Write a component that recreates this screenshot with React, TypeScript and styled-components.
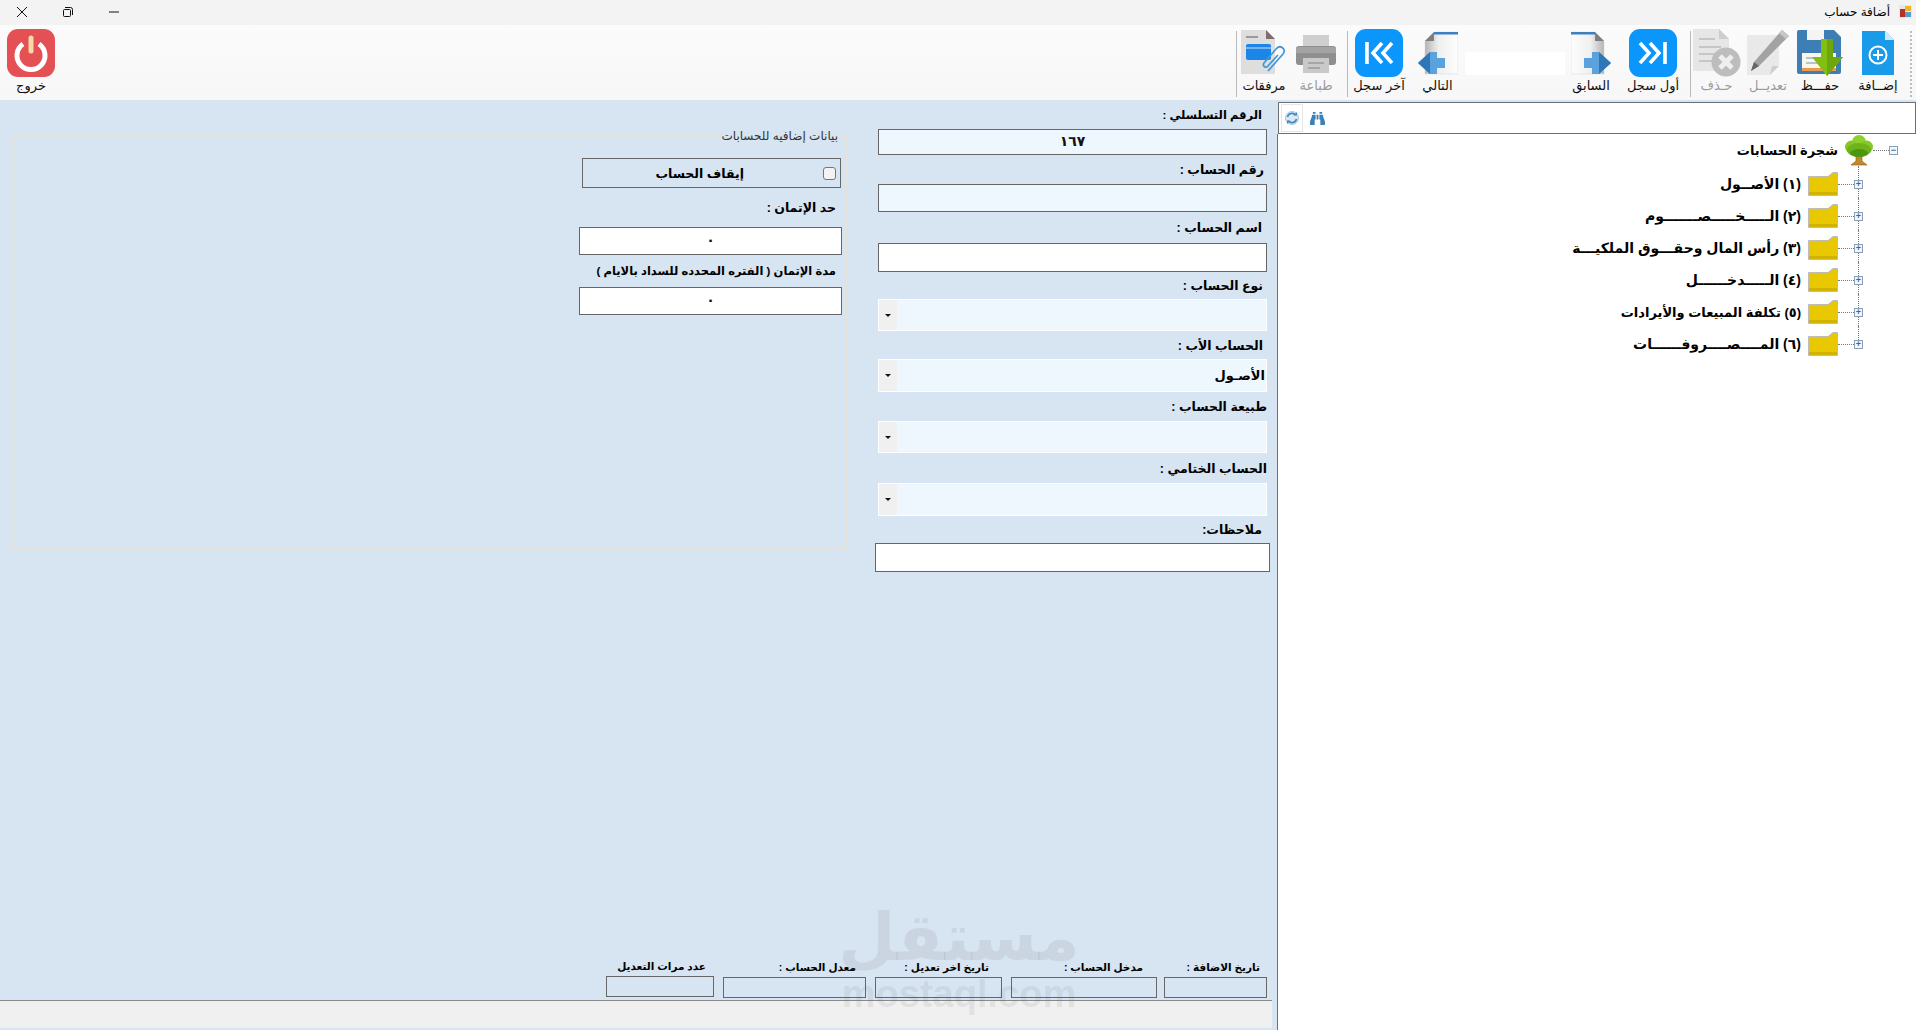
import React from 'react'
import styled, { createGlobalStyle } from 'styled-components'
import { FaBinoculars } from 'react-icons/fa'

const GlobalStyle = createGlobalStyle`
    html, body, #root {
        margin: 0;
        height: 100%;
    }
    body {
        overflow: hidden;
        font-family: "Liberation Sans", "DejaVu Sans", sans-serif;
        background-color: #d7e4f1;
        color: #000;
    }
`

const AddIcon = () => (
    <svg width="32" height="44" viewBox="0 0 32 44">
        <path d="M0 0H23L32 9V44H0Z" fill="#1a9bea" />
        <path d="M23 0L32 9H23Z" fill="#cfe9fa" />
        <circle cx="16" cy="24" r="8.5" fill="none" stroke="#fff" strokeWidth="2" />
        <path d="M16 19V29M11 24H21" stroke="#fff" strokeWidth="2" />
    </svg>
)

const SaveIcon = () => (
    <svg width="46" height="46" viewBox="0 0 46 46">
        <path d="M2 0H37L44 7V42Q44 44 42 44H2Q0 44 0 42V2Q0 0 2 0Z" fill="#3d7eb4" />
        <rect x="10" y="0" width="17" height="10" fill="#f4f4f4" />
        <rect x="5" y="23" width="34" height="18" fill="#fbf6ec" />
        <rect x="5" y="38" width="34" height="3" fill="#e59a55" />
        <path d="M9 28H24M9 33H24" stroke="#9db4c7" strokeWidth="1.5" />
        <path d="M24 9H36V27H46L30 46L15 27H24Z" fill="#83bf12" />
        <path d="M30 9H36V27H46L30 46Z" fill="#6ea70b" />
    </svg>
)

const EditIcon = () => (
    <svg width="44" height="46" viewBox="0 0 44 46">
        <path d="M1 5H33V35L24 45H1Z" fill="#e9e9e9" />
        <path d="M24 45L26 36H33Z" fill="#cfcfcf" />
        <path d="M36 0L43 6L13 36L5 41L8 32Z" fill="#a3a3a3" />
        <path d="M36 0L43 6L40 9L33 3Z" fill="#c7c7c7" />
        <path d="M8 32L13 36L5 41Z" fill="#666" />
    </svg>
)

const DeleteIcon = () => (
    <svg width="48" height="48" viewBox="0 0 48 48">
        <path d="M0 0H26L36 10V42H0Z" fill="#e6e6e6" />
        <path d="M26 0L36 10H26Z" fill="#cdcdcd" />
        <path d="M6 10H22M6 18H28M6 25H24M6 32H20" stroke="#c6c6c6" strokeWidth="2" />
        <circle cx="33" cy="33" r="14.5" fill="#bdbdbd" />
        <path d="M27 27L39 39M39 27L27 39" stroke="#efefef" strokeWidth="5" />
    </svg>
)

const NavIcon = ({ flip }: { flip?: boolean }) => (
    <svg width="48" height="48" viewBox="0 0 48 48">
        <rect width="48" height="48" rx="11" fill="#0a96fb" />
        <g transform={flip ? 'matrix(-1 0 0 1 48 0)' : undefined} fill="none" stroke="#fff" strokeWidth="3.6">
            <path d="M11 14L20 24L11 34M21 14L30 24L21 34" />
            <path d="M36 13V35" />
        </g>
    </svg>
)

const DocArrowIcon = ({ flip }: { flip?: boolean }) => {
    const id = flip ? 'docFadeL' : 'docFadeR'
    return (
        <svg width="40" height="46" viewBox="0 0 40 46">
            <defs>
                <linearGradient id={id} x1="0" x2="1" y1="0" y2="0">
                    <stop offset="0" stopColor="#fdfdfd" />
                    <stop offset="0.6" stopColor="#efefef" />
                    <stop offset="1" stopColor="#b4b4b4" />
                </linearGradient>
            </defs>
            <g transform={flip ? 'matrix(-1 0 0 1 40 0)' : undefined}>
                <path d="M0 2H24L33 11V44H0Z" fill={`url(#${id})`} stroke="#d4d4d4" strokeWidth="0.5" />
                <rect y="2" width="24" height="2.5" fill="#3f7fc0" />
                <path d="M24 2L33 11H24Z" fill="#7f7f7f" />
                <path d="M21 22H28L40 33L28 44H21V38H13V28H21Z" fill="#5aa2dd" />
                <path d="M28 22L40 33L28 44V33Z" fill="#2f76b6" />
            </g>
        </svg>
    )
}

const PrinterIcon = () => (
    <svg width="40" height="38" viewBox="0 0 40 38">
        <rect x="7" y="0" width="26" height="12" fill="#cfcfcf" />
        <path d="M3 11H37Q40 11 40 14V27Q40 30 37 30H3Q0 30 0 27V14Q0 11 3 11Z" fill="#8f8f8f" />
        <rect x="0" y="12" width="40" height="6" fill="#a3a3a3" />
        <rect x="7" y="23" width="26" height="15" fill="#c9c9c9" />
        <path d="M12 28H28M12 33H24" stroke="#9a9a9a" strokeWidth="1.5" />
    </svg>
)

const AttachIcon = () => (
    <svg width="46" height="46" viewBox="0 0 46 46">
        <path d="M0 0H25L34 9V44H0Z" fill="#dedede" />
        <path d="M25 0L34 9H25Z" fill="#7d6d6d" />
        <path d="M5 7H17" stroke="#999" strokeWidth="2" />
        <rect x="5" y="14" width="25" height="16" rx="2" fill="#1c86e8" />
        <path d="M5 18H30" stroke="#8fc5f5" strokeWidth="1.5" />
        <path d="M27 41L42 24C46 19 39 14 35 19L23 33C21 36 25 39 27 36L37 25" fill="none" stroke="#3f97d8" strokeWidth="1.7" />
    </svg>
)

const PowerIcon = () => (
    <svg width="48" height="48" viewBox="0 0 48 48">
        <rect width="48" height="48" rx="11" fill="#e55054" />
        <path d="M16 15A14 14 0 1 0 32 15" fill="none" stroke="#fff" strokeWidth="5" />
        <path d="M24 9V22" stroke="#f9d9a8" strokeWidth="5" strokeLinecap="round" />
    </svg>
)

const TreeIcon = () => (
    <svg width="28" height="31" viewBox="0 0 28 31">
        <path d="M11 20H17V26L22 30H6L11 26Z" fill="#c28a2c" stroke="#8a5a12" strokeWidth="0.6" />
        <circle cx="14" cy="7" r="7" fill="#8fd02e" />
        <circle cx="6.5" cy="12" r="6.5" fill="#86c826" />
        <circle cx="21.5" cy="12" r="6.5" fill="#86c826" />
        <ellipse cx="14" cy="15" rx="12" ry="7" fill="#6fb31c" />
        <ellipse cx="14" cy="18" rx="9" ry="4" fill="#4f9610" />
    </svg>
)

const FolderIcon = () => (
    <svg width="30" height="24" viewBox="0 0 30 24">
        <path d="M0.5 4.5H20L25 0.5H29.5V23.5H0.5Z" fill="#e8c800" stroke="#bdbdbd" />
        <rect x="1" y="20" width="28" height="3" fill="#d4b300" />
    </svg>
)

const RefreshIcon = () => (
    <svg width="16" height="16" viewBox="0 0 16 16">
        <circle cx="8" cy="8" r="6.5" fill="#dbe9f4" stroke="#a9c8e0" />
        <path d="M3.5 7A4.6 4.6 0 0 1 11.5 5M12.5 9A4.6 4.6 0 0 1 4.5 11" fill="none" stroke="#3f86bb" strokeWidth="1.6" />
        <path d="M9.5 5.5H13V2ZM6.5 10.5H3V14Z" fill="#3f86bb" />
    </svg>
)

const AppIcon = () => (
    <svg width="13" height="13" viewBox="0 0 13 13">
        <rect width="13" height="13" fill="#e8e8e8" />
        <rect x="6" y="1" width="6" height="5" fill="#f0b429" />
        <rect x="1" y="4" width="5" height="8" fill="#b5331f" />
        <rect x="6" y="7" width="6" height="5" fill="#5a9bd5" />
    </svg>
)

const CloseGlyph = () => (
    <svg width="10" height="10" viewBox="0 0 10 10">
        <path d="M0 0L10 10M10 0L0 10" stroke="#111" strokeWidth="1" />
    </svg>
)

const RestoreGlyph = () => (
    <svg width="10" height="10" viewBox="0 0 10 10">
        <path d="M2 0.5H7.5Q9.5 0.5 9.5 2.5V8" fill="none" stroke="#111" />
        <rect x="0.5" y="2.5" width="7" height="7" rx="1" fill="none" stroke="#111" />
    </svg>
)

const MinimizeGlyph = () => (
    <svg width="10" height="10" viewBox="0 0 10 10">
        <path d="M0 5H10" stroke="#111" />
    </svg>
)

const toolbarRight = [
    { kind: 'sep', ml: 0 },
    { label: 'مرفقات', w: 54, icon: <AttachIcon /> },
    { label: 'طباعة', w: 50, icon: <PrinterIcon />, off: true, gap: 2 },
    { kind: 'sep', ml: 6 },
    { label: 'آخر سجل', w: 62, icon: <NavIcon flip /> },
    { label: 'التالي', w: 55, icon: <DocArrowIcon flip /> },
    { kind: 'blank' },
    { label: 'السابق', w: 52, icon: <DocArrowIcon /> },
    { label: 'أول سجل', w: 72, icon: <NavIcon /> },
    { kind: 'sep', ml: 1 },
    { label: 'حـذف', w: 51, icon: <DeleteIcon />, off: true },
    { label: 'تعديــل', w: 52, icon: <EditIcon />, off: true },
    { label: 'حفـــظ', w: 52, icon: <SaveIcon /> },
    { label: 'إضــافة', w: 64, icon: <AddIcon /> },
]

const mainFields = [
    { label: 'الرقم التسلسلي :', gap: 29, inset: 5, size: 11.5, type: 'text', value: '١٦٧', tint: true, h: 26 },
    { label: 'رقم الحساب :', gap: 29, inset: 3, type: 'text', value: '', tint: true, h: 28 },
    { label: 'اسم الحساب :', gap: 31, inset: 5, type: 'text', value: '', h: 29 },
    { label: 'نوع الحساب :', gap: 27, inset: 4, type: 'combo', value: '', h: 32 },
    { label: 'الحساب الأب :', gap: 28, inset: 4, type: 'combo', value: 'الأصـول', h: 33 },
    { label: 'طبيعة الحساب :', gap: 29, inset: 0, type: 'combo', value: '', h: 32 },
    { label: 'الحساب الختامي :', gap: 30, inset: 0, type: 'combo', value: '', h: 33 },
]

const footerFields = [
    { label: 'عدد مرات التعديل', w: 108, inset: 8, ml: 0, lift: true },
    { label: 'معدل الحساب :', w: 143, inset: 10, ml: 9 },
    { label: 'تاريخ اخر تعديل :', w: 127, inset: 13, ml: 9 },
    { label: 'مدخل الحساب :', w: 146, inset: 14, ml: 9 },
    { label: 'تاريخ الاضافة :', w: 103, inset: 7, ml: 7 },
]

const treeItems = [
    { text: '(١) الأصــول', size: 14 },
    { text: '(٢) الـــــخـــــصـــــــوم', size: 14 },
    { text: '(٣) رأس المال وحقـــوق الملكيـــة', size: 14 },
    { text: '(٤) الـــــدخــــــل', size: 14 },
    { text: '(٥) تكلفة المبيعات والأيرادات', size: 13 },
    { text: '(٦) المــــصــــروفــــــات', size: 14 },
]

export default function App() {
    return (
        <Page>
            <GlobalStyle />
            <TitleBar>
                <WindowButtons>
                    <CloseGlyph />
                    <RestoreGlyph />
                    <MinimizeGlyph />
                </WindowButtons>
                <WindowTitle>
                    <span>أضافة حساب</span>
                    <AppIcon />
                </WindowTitle>
            </TitleBar>

            <Toolbar>
                <ToolItem $w={62}>
                    <PowerIcon />
                    <ToolLabel>خروج</ToolLabel>
                </ToolItem>
                <ToolGroup>
                    {toolbarRight.map((item, i) => {
                        if (item.kind === 'sep') return <ToolSeparator key={i} $ml={item.ml as number} />
                        if (item.kind === 'blank') return <BlankBox key={i} />
                        return (
                            <ToolItem key={i} $w={item.w as number} $gap={item.gap}>
                                {item.icon}
                                <ToolLabel $off={item.off}>{item.label}</ToolLabel>
                            </ToolItem>
                        )
                    })}
                    <Grip />
                </ToolGroup>
            </Toolbar>

            <Main>
                <FormArea>
                    <Watermark>
                        <WatermarkArabic>مستقل</WatermarkArabic>
                        <WatermarkLatin>mostaql.com</WatermarkLatin>
                    </Watermark>
                    <FormTop>
                        <ExtraPanel>
                            <ExtraLegend>بيانات إضافيه للحسابات</ExtraLegend>
                            <StopBox>
                                <StopText>إيقاف الحساب</StopText>
                                <Check type="checkbox" />
                            </StopBox>
                            <ExtraLabel $h={39} $inset={5}>حد الإتمان :</ExtraLabel>
                            <TextBox $h={28} $narrow $center readOnly defaultValue="٠" />
                            <ExtraLabel $h={32} $inset={5} $small>مدة الإتمان ( الفتره المحدده للسداد بالايام )</ExtraLabel>
                            <TextBox $h={28} $narrow $center readOnly defaultValue="٠" />
                        </ExtraPanel>

                        <FieldColumn>
                            {mainFields.map((f) => (
                                <React.Fragment key={f.label}>
                                    <FieldLabel $h={f.gap} $inset={f.inset} $size={f.size}>{f.label}</FieldLabel>
                                    {f.type === 'text' ? (
                                        <TextBox $h={f.h} $tint={f.tint} $center readOnly defaultValue={f.value} />
                                    ) : (
                                        <Combo $h={f.h}>
                                            <ComboArrow />
                                            <ComboValue>{f.value}</ComboValue>
                                        </Combo>
                                    )}
                                </React.Fragment>
                            ))}
                            <FieldLabel $h={27} $inset={5}>ملاحظات:</FieldLabel>
                            <NotesBox readOnly />
                        </FieldColumn>
                    </FormTop>

                    <FooterFields>
                        {footerFields.map((f) => (
                            <FooterField key={f.label} $w={f.w} $ml={f.ml} $lift={f.lift}>
                                <FooterLabel $inset={f.inset}>{f.label}</FooterLabel>
                                <FooterBox />
                            </FooterField>
                        ))}
                    </FooterFields>
                    <StatusBar />
                </FormArea>

                <TreePane>
                    <SearchBar>
                        <RefreshButton><RefreshIcon /></RefreshButton>
                        <FaBinoculars size={15} color="#3b80b6" />
                    </SearchBar>
                    <Tree>
                        <RootRow>
                            <RootText>شجرة الحسابات</RootText>
                            <TreeIcon />
                            <Stub />
                            <Expander>−</Expander>
                        </RootRow>
                        <TreeList>
                            {treeItems.map((item) => (
                                <TreeRow key={item.text}>
                                    <NodeText $size={item.size}>{item.text}</NodeText>
                                    <FolderIcon />
                                    <Stub />
                                    <Expander>+</Expander>
                                </TreeRow>
                            ))}
                        </TreeList>
                    </Tree>
                </TreePane>
            </Main>
        </Page>
    )
}

const Page = styled.div`
    height: 100vh;
    display: flex;
    flex-direction: column;
`

const TitleBar = styled.header`
    height: 25px;
    flex: none;
    background-color: #f3f3f3;
    display: flex;
    justify-content: space-between;
    align-items: center;
`

const WindowButtons = styled.div`
    display: flex;
    align-items: center;
    gap: 36px;
    padding-left: 17px;
    margin-top: -2px;
`

const WindowTitle = styled.div`
    display: flex;
    align-items: center;
    gap: 9px;
    padding-right: 4px;
    font-size: 12px;
    margin-top: -2px;
`

const Toolbar = styled.div`
    height: 75px;
    flex: none;
    display: flex;
    justify-content: space-between;
    background: linear-gradient(#fbfbfb, #f7f7f7);
`

const ToolGroup = styled.div`
    display: flex;
    padding-right: 4px;
`

const ToolItem = styled.div<{ $w: number; $gap?: number }>`
    width: ${(p) => p.$w}px;
    flex: none;
    display: flex;
    flex-direction: column;
    align-items: center;
    padding-top: ${(p) => 4 + (p.$gap ?? 0)}px;
    box-sizing: border-box;

    & > svg {
        flex: none;
        height: ${(p) => 48 - (p.$gap ?? 0)}px;
    }
`

const ToolLabel = styled.span<{ $off?: boolean }>`
    font-size: 13px;
    line-height: 14px;
    margin-top: 2px;
    white-space: nowrap;
    direction: rtl;
    color: ${(p) => (p.$off ? '#9b9b9b' : '#111')};
`

const ToolSeparator = styled.div<{ $ml: number }>`
    width: 1px;
    flex: none;
    height: 66px;
    margin: 6px 0 0 ${(p) => p.$ml}px;
    background-color: #b9b9b9;
`

const BlankBox = styled.div`
    width: 100px;
    height: 23px;
    margin-top: 27px;
    background-color: #fff;
`

const Grip = styled.div`
    width: 0;
    height: 66px;
    margin-top: 6px;
    border-right: 2px dotted #bdbdbd;
`

const Main = styled.main`
    flex: 1;
    min-height: 0;
    display: flex;
    background-color: #d7e4f1;
`

const FormArea = styled.section`
    width: 1277px;
    flex: none;
    display: flex;
    flex-direction: column;
    position: relative;
`

const Watermark = styled.div`
    position: absolute;
    left: 843px;
    top: 795px;
    width: 232px;
    display: flex;
    flex-direction: column;
    align-items: center;
    color: rgba(90, 90, 90, 0.1);
    pointer-events: none;
    font-weight: 700;
`

const WatermarkArabic = styled.span`
    font-size: 66px;
    line-height: 84px;
`

const WatermarkLatin = styled.span`
    font-size: 38px;
    line-height: 30px;
`

const FormTop = styled.div`
    flex: 1;
    display: flex;
    align-items: flex-start;
    padding: 0 10px 0 12px;
`

const ExtraPanel = styled.fieldset`
    width: 835px;
    height: 413px;
    flex: none;
    margin: 36px 31px 0 0;
    padding: 0 5px 0 0;
    box-sizing: border-box;
    border: 1px solid #e6e4da;
    display: flex;
    flex-direction: column;
    align-items: flex-end;
    position: relative;
`

const ExtraLegend = styled.div`
    position: absolute;
    top: -8px;
    right: 8px;
    padding-left: 2px;
    direction: rtl;
    background-color: #d7e4f1;
    font-size: 12px;
    line-height: 14px;
    color: #333;
`

const StopBox = styled.div`
    width: 259px;
    height: 30px;
    margin: 21px 0 0;
    box-sizing: border-box;
    border: 1px solid #666;
    display: flex;
    align-items: center;
    justify-content: flex-end;
    padding-right: 4px;
`

const StopText = styled.span`
    direction: rtl;
    font-size: 12.5px;
    font-weight: 700;
    margin-right: 79px;
`

const Check = styled.input`
    appearance: none;
    width: 13px;
    height: 13px;
    margin: 0;
    box-sizing: border-box;
    border: 1px solid #767676;
    border-radius: 3px;
    background-color: #f3f3f3;
`

const ExtraLabel = styled.div<{ $h: number; $inset: number; $small?: boolean }>`
    width: 263px;
    height: ${(p) => p.$h}px;
    box-sizing: border-box;
    padding-right: ${(p) => p.$inset}px;
    direction: rtl;
    display: flex;
    align-items: center;
    font-size: ${(p) => (p.$small ? 11.5 : 12.5)}px;
    font-weight: 700;
    white-space: nowrap;
`

const FieldColumn = styled.div`
    width: 389px;
    flex: none;
    display: flex;
    flex-direction: column;
`

const FieldLabel = styled.div<{ $h: number; $inset: number; $size?: number }>`
    height: ${(p) => p.$h}px;
    flex: none;
    padding-right: ${(p) => p.$inset}px;
    direction: rtl;
    display: flex;
    align-items: center;
    font-size: ${(p) => p.$size ?? 12.5}px;
    font-weight: 700;
`

const TextBox = styled.input<{ $h: number; $tint?: boolean; $center?: boolean; $narrow?: boolean }>`
    height: ${(p) => p.$h}px;
    width: ${(p) => (p.$narrow ? '263px' : '100%')};
    flex: none;
    box-sizing: border-box;
    margin: 0 ${(p) => (p.$narrow ? -1 : 0)}px 0 0;
    padding: 0 2px 3px;
    border: 1px solid #666;
    border-radius: 0;
    outline: none;
    direction: rtl;
    background-color: ${(p) => (p.$tint ? '#eef6fe' : '#fff')};
    text-align: ${(p) => (p.$center ? 'center' : 'right')};
    font: 700 14px "Liberation Sans", "DejaVu Sans", sans-serif;
    letter-spacing: 4px;
    color: #111;
`

const Combo = styled.div<{ $h: number }>`
    height: ${(p) => p.$h}px;
    flex: none;
    box-sizing: border-box;
    border: 1px solid #fff;
    background-color: #eef6fe;
    display: flex;
`

const ComboArrow = styled.div`
    width: 18px;
    flex: none;
    background-color: #f0f0f0;
    display: flex;
    align-items: center;
    justify-content: center;

    &::after {
        content: "";
        border-top: 3px solid #111;
        border-left: 3px solid transparent;
        border-right: 3px solid transparent;
    }
`

const ComboValue = styled.div`
    flex: 1;
    direction: rtl;
    padding-right: 1px;
    display: flex;
    align-items: center;
    font-size: 13px;
    font-weight: 700;
`

const NotesBox = styled.input`
    height: 29px;
    width: 395px;
    flex: none;
    margin: 0 -3px;
    box-sizing: border-box;
    border: 1px solid #666;
    outline: none;
    background-color: #fff;
`

const FooterFields = styled.div`
    flex: none;
    display: flex;
    justify-content: flex-end;
    padding: 0 10px 2px 0;
`

const FooterField = styled.div<{ $w: number; $ml: number; $lift?: boolean }>`
    width: ${(p) => p.$w}px;
    flex: none;
    margin-left: ${(p) => p.$ml}px;
    margin-top: ${(p) => (p.$lift ? -1 : 0)}px;
    margin-bottom: ${(p) => (p.$lift ? 1 : 0)}px;
    display: flex;
    flex-direction: column;
`

const FooterLabel = styled.div<{ $inset: number }>`
    height: 12px;
    line-height: 12px;
    margin-bottom: 4px;
    padding-right: ${(p) => p.$inset}px;
    direction: rtl;
    font-size: 10.5px;
    font-weight: 700;
    white-space: nowrap;
`

const FooterBox = styled.div`
    height: 21px;
    box-sizing: border-box;
    border: 1px solid #666;
`

const StatusBar = styled.footer`
    height: 30px;
    width: 1272px;
    flex: none;
    box-sizing: border-box;
    border-top: 1px solid #8a8a8a;
    border-bottom: 2px solid #d7e4f1;
    background-color: #f0f0f0;
`

const TreePane = styled.aside`
    flex: 1;
    min-width: 0;
    padding-top: 2px;
    display: flex;
    flex-direction: column;
`

const SearchBar = styled.div`
    height: 32px;
    flex: none;
    box-sizing: border-box;
    margin-left: 1px;
    padding-left: 2px;
    border: 1px solid #6c7075;
    background-color: #fff;
    display: flex;
    align-items: center;
    gap: 7px;
`

const RefreshButton = styled.div`
    width: 22px;
    height: 28px;
    box-sizing: border-box;
    border: 1px solid #e6e6e6;
    display: flex;
    align-items: center;
    justify-content: center;
`

const Tree = styled.div`
    flex: 1;
    border-left: 1px solid #6c7075;
    background-color: #fff;
`

const RootRow = styled.div`
    height: 32px;
    display: flex;
    align-items: center;
    justify-content: flex-end;
    padding-right: 18px;
`

const RootText = styled.span`
    direction: rtl;
    font-size: 13px;
    font-weight: 700;
    margin-right: 7px;
`

const TreeList = styled.div`
    margin-top: 2px;
`

const TreeRow = styled.div`
    height: 32px;
    display: flex;
    align-items: center;
    justify-content: flex-end;
    padding-right: 53px;
    position: relative;

    &::before {
        content: "";
        position: absolute;
        right: 57px;
        top: -2px;
        bottom: 0;
        border-right: 1px dotted #777;
    }

    &:last-child::before {
        bottom: 50%;
    }
`

const NodeText = styled.span<{ $size: number }>`
    direction: rtl;
    font-size: ${(p) => p.$size}px;
    font-weight: 700;
    margin-right: 7px;
    white-space: nowrap;
`

const Stub = styled.span`
    width: 16px;
    flex: none;
    border-top: 1px dotted #777;
`

const Expander = styled.span`
    width: 9px;
    height: 9px;
    flex: none;
    box-sizing: border-box;
    border: 1px solid #8aa0b5;
    background-color: #f3f7fb;
    display: flex;
    align-items: center;
    justify-content: center;
    font: 700 9px "Liberation Sans", sans-serif;
    color: #2a6fa8;
    position: relative;
`
